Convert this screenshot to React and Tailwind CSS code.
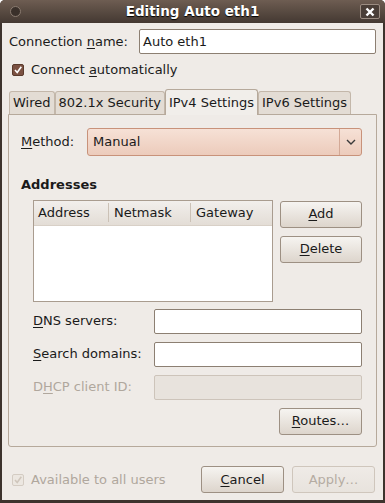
import React from 'react';

const font = { fontFamily: '"DejaVu Sans", sans-serif' };

const U = ({ children }) => <span className="underline underline-offset-2">{children}</span>;

const Button = ({ children, disabled, className = '' }) => (
  <div
    className={
      'flex items-center justify-center rounded-[3px] border bg-gradient-to-b ' +
      (disabled
        ? 'border-[#cfc6bc] from-[#efebe7] to-[#e8e3dd] text-[#b5aca2] '
        : 'border-[#9d9083] from-[#f6f4f1] to-[#ddd5cc] text-[#1a1a1a] ') +
      className
    }
  >
    {children}
  </div>
);

const Entry = ({ value = '', disabled, className = '' }) => (
  <div
    className={
      'flex items-center rounded-[2px] border px-[3px] ' +
      (disabled ? 'border-[#cdc4ba] bg-[#e8e3dd]' : 'border-[#8c7f72] bg-white') +
      ' ' + className
    }
  >
    {value}
  </div>
);

const Check = ({ disabled }) => (
  <div
    className={
      'flex h-[12px] w-[12px] items-center justify-center rounded-[2px] border ' +
      (disabled ? 'border-[#d4ccc3] bg-[#ece7e1]' : 'border-[#5a3a2c] bg-[#7b5142]')
    }
  >
    <svg width="10" height="10" viewBox="0 0 10 10">
      <path
        d="M2 5 L4.2 7.5 L8.3 1.8"
        fill="none"
        stroke={disabled ? '#cfc6bc' : '#ffffff'}
        strokeWidth="1.6"
      />
    </svg>
  </div>
);

const Tab = ({ children, active }) => (
  <div
    className={
      'flex items-center rounded-t-[3px] border border-b-0 px-[3px] ' +
      (active
        ? 'h-[26px] border-[#b6a99b] bg-[#f1eeea] -mb-px relative z-10'
        : 'h-[23px] border-[#c3b7aa] bg-[#e3dcd4]')
    }
  >
    {children}
  </div>
);

export default function App() {
  return (
    <div
      className="flex h-[503px] w-[385px] flex-col overflow-hidden rounded-t-[5px] bg-[#3d332d] text-[13px] text-[#1a1a1a]"
      style={font}
    >
      {/* Title bar */}
      <div className="relative flex h-[23px] shrink-0 items-center justify-center bg-gradient-to-b from-[#6e5d52] to-[#443932]">
        <div className="absolute left-[10px] top-[6px] h-[11px] w-[11px] rounded-full border border-[#8a7b70] bg-[#3a302a]" />
        <span className="text-[13.5px] font-bold text-white [text-shadow:0_1px_1px_#000]">Editing Auto eth1</span>
        <div className="absolute right-[5px] top-[4px] flex h-[15px] w-[20px] items-center justify-center rounded-[2px] border border-[#9c8d82] bg-[#4a3e37]">
          <svg width="10" height="10" viewBox="0 0 10 10">
            <path d="M1.5 1.5 L8.5 8.5 M8.5 1.5 L1.5 8.5" stroke="#ffffff" strokeWidth="2.4" />
          </svg>
        </div>
      </div>

      {/* Body */}
      <div className="mx-[2px] mb-[3px] flex flex-1 flex-col bg-[#efebe7] pt-[6px]">
        <div className="flex h-[25px] items-center pl-[7px] pr-[7px]">
          <span className="w-[130px]">
            Connection <U>n</U>ame:
          </span>
          <Entry value="Auto eth1" className="h-[25px] flex-1" />
        </div>

        <div className="mt-[6px] flex h-[20px] items-center gap-[7px] pl-[10px]">
          <Check />
          <span>
            Connect <U>a</U>utomatically
          </span>
        </div>

        {/* Tabs */}
        <div className="mt-[9px] flex items-end pl-[7px]">
          <Tab>Wired</Tab>
          <Tab>802.1x Security</Tab>
          <Tab active>IPv4 Settings</Tab>
          <Tab>IPv6 Settings</Tab>
        </div>

        <div className="mx-[6px] flex h-[333px] flex-col rounded-b-[3px] border border-[#b6a99b] bg-[#efebe7] pl-[12px] pr-[14px]">
          <div className="mt-[13px] flex h-[28px] items-center">
            <span className="w-[66px]">
              <U>M</U>ethod:
            </span>
            <div className="flex h-[28px] flex-1 items-center rounded-[3px] border border-[#c8927a] bg-gradient-to-b from-[#f6e1d6] to-[#eccbbb] pl-[5px]">
              <span className="flex-1">Manual</span>
              <div className="flex h-full w-[22px] items-center justify-center border-l border-[#d3a996]">
                <svg width="10" height="6" viewBox="0 0 10 6">
                  <path d="M1 1 L5 5 L9 1" fill="none" stroke="#3a3a3a" strokeWidth="1.4" />
                </svg>
              </div>
            </div>
          </div>

          <div className="mt-[19px] font-bold">Addresses</div>

          <div className="mt-[5px] flex pl-[12px]">
            <div className="flex h-[102px] w-[240px] flex-col border border-[#a99c8f] bg-white">
              <div className="flex h-[25px] items-center border-b border-[#d8d0c7] bg-gradient-to-b from-[#f2efec] to-[#e3ddd6]">
                <span className="w-[74px] pl-[4px]">Address</span>
                <span className="w-[82px] border-l border-[#cbc1b6] pl-[5px]">Netmask</span>
                <span className="flex-1 border-l border-[#cbc1b6] pl-[5px]">Gateway</span>
              </div>
            </div>
            <div className="ml-[7px] flex flex-1 flex-col gap-[8px] pt-[1px]">
              <Button className="h-[27px]">
                <span>
                  <U>A</U>dd
                </span>
              </Button>
              <Button className="h-[27px]">
                <span>
                  <U>D</U>elete
                </span>
              </Button>
            </div>
          </div>

          <div className="mt-[7px] flex flex-col gap-[8px] pl-[12px]">
            <div className="flex h-[25px] items-center">
              <span className="w-[121px]">
                <U>D</U>NS servers:
              </span>
              <Entry className="h-[25px] flex-1" />
            </div>
            <div className="flex h-[25px] items-center">
              <span className="w-[121px]">
                <U>S</U>earch domains:
              </span>
              <Entry className="h-[25px] flex-1" />
            </div>
            <div className="flex h-[25px] items-center text-[#b0a79d]">
              <span className="w-[121px]">
                D<U>H</U>CP client ID:
              </span>
              <Entry disabled className="h-[25px] flex-1" />
            </div>
          </div>

          <div className="mt-[8px] flex justify-end">
            <Button className="h-[27px] w-[83px]">
              <span>
                <U>R</U>outes…
              </span>
            </Button>
          </div>
        </div>

        <div className="mt-[19px] flex h-[27px] items-center pl-[10px] pr-[8px]">
          <Check disabled />
          <span className="ml-[7px] flex-1 text-[#b0a79d]">Available to all users</span>
          <Button className="h-[27px] w-[83px]">
            <span>
              <U>C</U>ancel
            </span>
          </Button>
          <Button disabled className="ml-[8px] h-[27px] w-[83px]">
            Apply…
          </Button>
        </div>
      </div>
    </div>
  );
}
